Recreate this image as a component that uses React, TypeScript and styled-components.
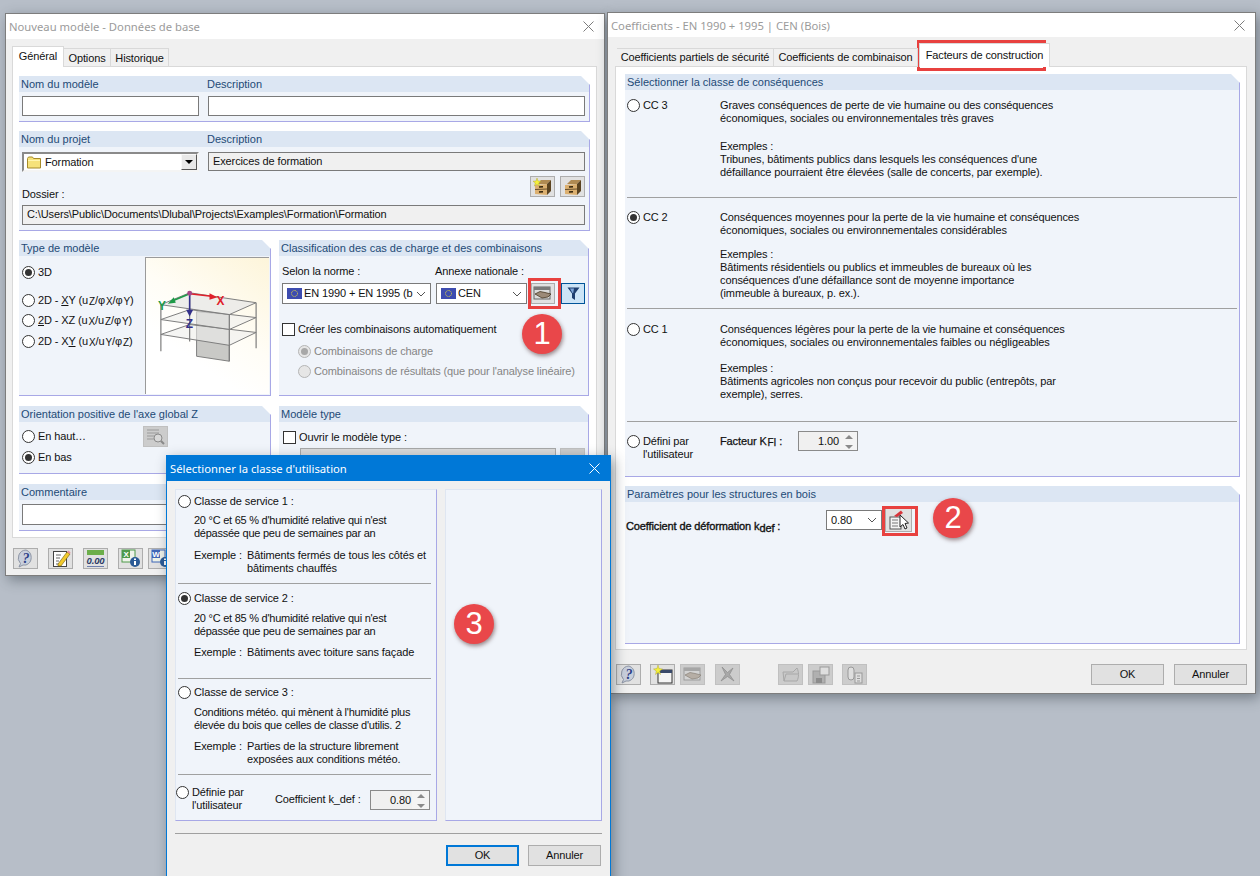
import React from 'react';
import styled, {createGlobalStyle} from 'styled-components';

const GlobalStyle = createGlobalStyle`
    html, body {
        margin: 0;
        padding: 0;
        background: #b7bec8;
    }
    body {
        font-family: "Liberation Sans", Arial, sans-serif;
        font-size: 11px;
        letter-spacing: -0.12px;
        line-height: 13px;
        color: #111;
    }
    * {
        box-sizing: border-box;
    }
`;

const Desktop = styled.div`
    position: relative;
    width: 1260px;
    height: 876px;
    overflow: hidden;
    background: #b7bec8;
`;

const Win = styled.div<{$x: number; $y: number; $w: number; $h: number; $active?: boolean}>`
    position: absolute;
    left: ${(p) => p.$x}px;
    top: ${(p) => p.$y}px;
    width: ${(p) => p.$w}px;
    height: ${(p) => p.$h}px;
    background: #f0f0f0;
    border: 1px solid ${(p) => (p.$active ? '#0078d7' : '#7d7d7d')};
    box-shadow: 3px 4px 12px rgba(40, 50, 60, 0.45);
    display: flex;
    flex-direction: column;
`;

const TitleBar = styled.div<{$h: number; $active?: boolean}>`
    flex: none;
    height: ${(p) => p.$h}px;
    display: flex;
    align-items: center;
    justify-content: space-between;
    padding: 0 10px 0 3px;
    font-family: "Noto Sans", sans-serif;
    font-size: 11.25px;
    letter-spacing: 0;
    background: ${(p) => (p.$active ? '#0078d7' : '#fff')};
    color: ${(p) => (p.$active ? '#fff' : '#9b9b9b')};
`;

const WinBody = styled.div<{$pad: string}>`
    flex: 1;
    padding: ${(p) => p.$pad};
    min-height: 0;
`;

const TabRow = styled.div`
    display: flex;
    align-items: flex-end;
    margin-bottom: -1px;
    position: relative;
    z-index: 1;
`;

const Tab = styled.div<{$w: number; $h: number; $lh: number; $on?: boolean; $ml?: number}>`
    width: ${(p) => p.$w}px;
    height: ${(p) => p.$h}px;
    margin-left: ${(p) => p.$ml || 0}px;
    background: ${(p) => (p.$on ? '#fff' : '#f0f0f0')};
    border: 1px solid #d9d9d9;
    border-bottom: ${(p) => (p.$on ? '0' : '1px solid #d9d9d9')};
    border-left: ${(p) => (p.$on ? '1px solid #d9d9d9' : '0')};
    text-align: center;
    line-height: ${(p) => p.$lh}px;
    white-space: nowrap;
`;

const Panel = styled.div<{$h: number; $pad: string; $gap: number}>`
    height: ${(p) => p.$h}px;
    background: #fff;
    border: 1px solid #d9d9d9;
    padding: ${(p) => p.$pad};
    display: flex;
    flex-direction: column;
    gap: ${(p) => p.$gap}px;
`;

const Section = styled.div<{$h: number}>`
    height: ${(p) => p.$h}px;
    display: flex;
    flex-direction: column;
`;

const SectionHead = styled.div<{$cols?: string}>`
    flex: none;
    height: 16px;
    padding-left: 2px;
    display: grid;
    grid-template-columns: ${(p) => p.$cols || '1fr'};
    line-height: 16px;
    letter-spacing: 0;
    color: #234a76;
    background: #dce6f3;
    border-right: 1px solid #a8a8e6;
    clip-path: polygon(0 0, calc(100% - 9px) 0, 100% 9px, 100% 100%, 0 100%);
`;

const SectionBody = styled.div<{$pad?: string}>`
    flex: 1;
    min-height: 0;
    background: #f0f4fa;
    border-right: 1px solid #a8a8e6;
    border-bottom: 1px solid #a8a8e6;
    padding: ${(p) => p.$pad || '0'};
`;

const FieldGrid = styled.div`
    display: grid;
    grid-template-columns: 177px 377px;
    gap: 9px;
    align-items: start;
`;

const Field = styled.div<{$h?: number; $w?: number; $gray?: boolean; $dim?: boolean}>`
    height: ${(p) => p.$h || 20}px;
    width: ${(p) => (p.$w ? `${p.$w}px` : 'auto')};
    flex: none;
    border: 1px solid ${(p) => (p.$dim ? '#a8a8a8' : '#7a7a7a')};
    background: ${(p) => (p.$dim ? '#dadada' : p.$gray ? '#f0f0f0' : '#fff')};
    padding: 0 4px;
    line-height: 17px;
    white-space: nowrap;
    overflow: hidden;
`;

const OldCombo = styled.div`
    height: 20px;
    display: flex;
    align-items: center;
    gap: 3px;
    border: 2px solid;
    border-color: #8a8a8a #f4f4f4 #f4f4f4 #8a8a8a;
    background: #fff;
    padding-left: 3px;
    position: relative;
`;

const OldComboArrow = styled.span`
    margin-left: auto;
    width: 16px;
    height: 16px;
    background: #e8e8e8;
    border: 1px solid;
    border-color: #f8f8f8 #555 #555 #f8f8f8;
    display: flex;
    align-items: center;
    justify-content: center;
    &::after {
        content: '';
        border: 4px solid transparent;
        border-top: 4px solid #000;
        border-bottom: 0;
    }
`;

const Combo = styled.div<{$w: number; $h?: number; $ml?: number}>`
    width: ${(p) => p.$w}px;
    height: ${(p) => p.$h || 21}px;
    margin-left: ${(p) => p.$ml || 0}px;
    flex: none;
    background: #fff;
    border: 1px solid #7a7a7a;
    display: flex;
    align-items: center;
    gap: 2px;
    padding: 0 4px;
    white-space: nowrap;
    overflow: hidden;
`;

const ComboText = styled.span`
    flex: 1;
    min-width: 0;
    overflow: hidden;
`;

const IconBtn = styled.div<{$w?: number; $h?: number; $ml?: number; $off?: boolean; $blue?: boolean}>`
    flex: none;
    width: ${(p) => p.$w || 25}px;
    height: ${(p) => p.$h || 21}px;
    margin-left: ${(p) => p.$ml || 0}px;
    display: flex;
    align-items: center;
    justify-content: center;
    border: 1px solid ${(p) => (p.$blue ? '#005499' : p.$off ? '#c0c0c0' : '#adadad')};
    background: ${(p) => (p.$blue ? '#cce4f7' : p.$off ? '#cccccc' : '#e1e1e1')};
    overflow: hidden;
`;

const MidRow = styled.div`
    height: 29px;
    margin-top: 4px;
    display: flex;
    justify-content: space-between;
`;

const MidLabel = styled.span`
    padding-top: 12px;
`;

const BtnGroup = styled.div`
    display: flex;
    gap: 5px;
`;

const TwoCols = styled.div`
    display: grid;
    grid-template-columns: 252px 310px;
    gap: 10px 8px;
    margin-bottom: 1px;
`;

const RadioRow = styled.div<{$h?: number; $mt?: number; $ml?: number; $off?: boolean}>`
    display: flex;
    align-items: center;
    gap: 3px;
    height: ${(p) => (p.$h ? `${p.$h}px` : 'auto')};
    margin-top: ${(p) => p.$mt || 0}px;
    margin-left: ${(p) => p.$ml || 0}px;
    color: ${(p) => (p.$off ? '#858585' : 'inherit')};
    white-space: nowrap;
`;

const RadioMark = styled.span<{$on?: boolean; $off?: boolean}>`
    flex: none;
    width: 13px;
    height: 13px;
    border-radius: 50%;
    border: 1px solid ${(p) => (p.$off ? '#b5b5b5' : '#333')};
    background: ${(p) => (p.$off ? '#e6e6e6' : '#fff')};
    display: flex;
    align-items: center;
    justify-content: center;
    &::after {
        content: '';
        display: ${(p) => (p.$on ? 'block' : 'none')};
        width: 7px;
        height: 7px;
        border-radius: 50%;
        background: ${(p) => (p.$off ? '#a8a8a8' : '#333')};
    }
`;

const CheckMark = styled.span`
    flex: none;
    width: 13px;
    height: 13px;
    background: #fff;
    border: 1px solid #333;
`;

const Low = styled.span`
    font-size: 10px;
    position: relative;
    top: 1px;
    margin-left: 1px;
`;

const TypeBody = styled.div`
    display: flex;
    height: 100%;
`;

const TypeList = styled.div`
    width: 126px;
    padding: 6px 0 0 3px;
`;

const ModelPicture = styled.div`
    width: 124px;
    height: 137px;
    margin-top: 1px;
    border-top: 1px solid #9a9a9a;
    border-left: 1px solid #9a9a9a;
    background: linear-gradient(215deg, #fdf5da 0%, #fffdf6 45%, #ffffff 70%);
`;

const LabelRow = styled.div`
    display: grid;
    grid-template-columns: 153px 1fr;
`;

const ComboRow = styled.div`
    display: flex;
    margin-top: 5px;
`;

const OptionRow = styled.div`
    display: grid;
    grid-template-columns: 121px 25px;
    height: 21px;
    align-items: center;
`;

const TemplateRow = styled.div`
    display: flex;
    gap: 4px;
    margin-top: 4px;
    padding-left: 17px;
`;

const Footer = styled.div<{$pad: string}>`
    display: flex;
    padding: ${(p) => p.$pad};
`;

const PushBtn = styled.div<{$def?: boolean; $ml?: number}>`
    width: 73px;
    height: 21px;
    margin-left: ${(p) => p.$ml || 0}px;
    text-align: center;
    line-height: ${(p) => (p.$def ? 17 : 19)}px;
    background: #e1e1e1;
    border: ${(p) => (p.$def ? '2px solid #0078d7' : '1px solid #adadad')};
`;

const PushSpace = styled.div`
    flex: 1;
`;

// right window
const ClassRow = styled.div<{$h: number; $pad: number; $line?: boolean}>`
    height: ${(p) => p.$h}px;
    margin: 0 2px 0 2px;
    padding-top: ${(p) => p.$pad}px;
    border-top: ${(p) => (p.$line ? '1px solid #a0a0a0' : '0')};
    display: grid;
    grid-template-columns: 93px 1fr;
    align-items: start;
`;

const Para = styled.p<{$mt?: number}>`
    margin: ${(p) => p.$mt || 0}px 0 0;
    white-space: pre-line;
`;

const TwoLine = styled.div`
    white-space: pre-line;
`;

const FactorRow = styled.div`
    display: flex;
    align-items: center;
    margin-top: -4px;
`;

const FactorLabel = styled.span<{$w: number}>`
    width: ${(p) => p.$w}px;
    flex: none;
    -webkit-text-stroke: 0.25px #111;
`;

const Spinner = styled.div`
    width: 60px;
    height: 20px;
    flex: none;
    display: flex;
    background: #f0f0f0;
    border: 1px solid #8a8a8a;
`;

const SpinValue = styled.span`
    flex: 1;
    text-align: right;
    line-height: 18px;
    padding-right: 1px;
`;

const SpinArrows = styled.span`
    width: 17px;
    flex: none;
    display: flex;
    flex-direction: column;
    background: #f4f4f4;
    &::before, &::after {
        content: '';
        flex: 1;
        margin: 3px auto;
        width: 0;
        height: 0;
        border: 4px solid transparent;
    }
    &::before {
        border-top: 0;
        border-bottom: 4px solid #8a8a8a;
    }
    &::after {
        border-bottom: 0;
        border-top: 4px solid #8a8a8a;
    }
`;

const WoodRow = styled.div`
    display: grid;
    grid-template-columns: 200px 56px auto;
    justify-content: start;
    padding: 6px 0 0 1px;
`;

const WoodLabel = styled.span`
    padding-top: 12px;
    white-space: nowrap;
    -webkit-text-stroke: 0.35px #111;
`;

const WoodSub = styled.span`
    font-size: 11px;
    position: relative;
    top: 2px;
`;

const WoodCombo = styled.div`
    margin-top: 2px;
`;

// dialog
const DialogCols = styled.div`
    display: grid;
    grid-template-columns: 262px 157px;
    gap: 8px;
`;

const DialogSection = styled.div`
    height: 332px;
    background: #f0f4fa;
    border: 1px solid;
    border-color: #dfe6f1 #a8a8e6 #a8a8e6 #dfe6f1;
`;

const ServiceRow = styled.div<{$h: number; $pad: number; $line?: boolean}>`
    height: ${(p) => p.$h}px;
    margin: 0 5px 0 2px;
    padding-top: ${(p) => p.$pad}px;
    border-bottom: ${(p) => (p.$line ? '1px solid #a0a0a0' : '0')};
`;

const ServiceText = styled.p<{$mt: number}>`
    margin: ${(p) => p.$mt}px 0 0 16px;
    white-space: pre-line;
    letter-spacing: -0.25px;
`;

const Example = styled.div<{$mt: number}>`
    display: grid;
    grid-template-columns: 53px 1fr;
    margin: ${(p) => p.$mt}px 0 0 16px;
    white-space: pre-line;
`;

const OwnRow = styled.div`
    display: flex;
    margin-top: 11px;
`;

const OwnLeft = styled.div`
    width: 99px;
    flex: none;
    display: flex;
    gap: 3px;
    white-space: pre-line;
`;

const OwnRight = styled.div`
    display: flex;
    align-items: center;
    margin-top: 1px;
`;

const OwnLabel = styled.span`
    width: 95px;
    flex: none;
    white-space: nowrap;
`;

const Divider = styled.div`
    height: 1px;
    margin-top: 12px;
    background: #a0a0a0;
`;

const DialogButtons = styled.div`
    display: flex;
    justify-content: flex-end;
    gap: 9px;
    margin: 11px 1px 0 0;
`;

// annotations over the screenshot
const Callout = styled.div<{$x: number; $y: number}>`
    position: absolute;
    left: ${(p) => p.$x}px;
    top: ${(p) => p.$y}px;
    width: 40px;
    height: 40px;
    border-radius: 50%;
    background: #e9474a;
    color: #fff;
    font-size: 31px;
    letter-spacing: 0;
    line-height: 40px;
    text-align: center;
    box-shadow: 1px 2px 4px rgba(60, 20, 20, 0.5);
`;

const Frame = styled.div<{$x: number; $y: number; $w: number; $h: number}>`
    position: absolute;
    left: ${(p) => p.$x}px;
    top: ${(p) => p.$y}px;
    width: ${(p) => p.$w}px;
    height: ${(p) => p.$h}px;
    border: 3px solid #e8413f;
`;

const Close = ({light}: {light?: boolean}) => (
    <svg
        width='11'
        height='11'
        viewBox='0 0 11 11'
    >
        <path
            d='M0.5 0.5L10.5 10.5M10.5 0.5L0.5 10.5'
            stroke={light ? '#fff' : '#7c7c7c'}
            strokeWidth='1'
            fill='none'
        />
    </svg>
);

const Chevron = () => (
    <svg
        width='10'
        height='6'
        viewBox='0 0 10 6'
    >
        <path
            d='M1 1L5 5L9 1'
            stroke='#555'
            fill='none'
        />
    </svg>
);

const EuFlag = () => (
    <svg
        width='15'
        height='11'
        viewBox='0 0 15 11'
    >
        <rect
            width='15'
            height='11'
            fill='#3d4cb0'
        />
        <circle
            cx='7.5'
            cy='5.5'
            r='3'
            fill='none'
            stroke='#d8cf4a'
            strokeWidth='1'
            strokeDasharray='1 0.6'
        />
    </svg>
);

const Folder = () => (
    <svg
        width='15'
        height='13'
        viewBox='0 0 15 13'
    >
        <path
            d='M0.5 2.5L1.5 1H5.5L6.5 2.5H13.5V12H0.5Z'
            fill='#f6e27a'
            stroke='#a68b2a'
        />
        <rect
            x='1'
            y='4'
            width='12'
            height='1'
            fill='#fff5b0'
        />
    </svg>
);

// filing cabinet seen from the lower left, top and side in shade
const Cabinet = ({star}: {star?: boolean}) => (
    <svg
        width='20'
        height='18'
        viewBox='0 0 20 18'
    >
        <path
            d='M4 6L8 2H18L14 6Z'
            fill='#b08a52'
        />
        <path
            d='M14 6L18 2V13L14 17Z'
            fill='#5b4320'
        />
        <path
            d='M2 7L14 6V17L2 16Z'
            fill='#dcb070'
        />
        <path
            d='M2 11.5L14 11'
            stroke='#4a3515'
            strokeWidth='0.8'
        />
        <path
            d='M6 9L10 8.7M6 14L10 13.7'
            stroke='#2e2008'
            strokeWidth='1.6'
        />
        {star && (
            <path
                d='M4 0L5 3L8 3.2L5.7 5L6.6 8L4 6.3L1.4 8L2.3 5L0 3.2L3 3Z'
                fill='#f4f03a'
                stroke='#a8a020'
                strokeWidth='0.4'
            />
        )}
    </svg>
);

const HandDoc = ({dim}: {dim?: boolean}) => (
    <svg
        width='20'
        height='15'
        viewBox='0 0 20 15'
        opacity={dim ? 0.45 : 1}
    >
        <rect
            x='1'
            y='1'
            width='16'
            height='12'
            fill='#dcdcdc'
            stroke='#666'
        />
        <rect
            x='1'
            y='1'
            width='16'
            height='3'
            fill='#7a7a7a'
        />
        <path
            d='M2 8L7 5.5L12 6.5L18 8L15 11L9 12Z'
            fill='#9c8a78'
            stroke='#3a2a14'
            strokeWidth='0.7'
        />
    </svg>
);

const Funnel = () => (
    <svg
        width='13'
        height='14'
        viewBox='0 0 13 14'
    >
        <path
            d='M0.5 0.5H12.5L8 6.5V13L5 11V6.5Z'
            fill='#1f3f70'
        />
        <path
            d='M3 1.5H7L6.2 6H5.5Z'
            fill='#7fa6d8'
        />
    </svg>
);

const Magnifier = () => (
    <svg
        width='21'
        height='18'
        viewBox='0 0 21 18'
    >
        <path
            d='M2 2H14M2 5H14M2 8H9M2 11H9'
            stroke='#9a9a9a'
        />
        <circle
            cx='13'
            cy='10'
            r='4'
            fill='#d8d8d8'
            stroke='#8a8a8a'
        />
        <path
            d='M16 13L19 16'
            stroke='#8a8a8a'
            strokeWidth='2'
        />
    </svg>
);

const Help = () => (
    <svg
        width='20'
        height='19'
        viewBox='0 0 20 19'
    >
        <path
            d='M10 1A8 8 0 0 1 10 16H7L3 18L4.5 14.5A8 8 0 0 1 10 1Z'
            fill='#c8cfdc'
            stroke='#8d95a5'
        />
        <text
            x='10'
            y='14'
            fontSize='14'
            fontWeight='700'
            fontStyle='italic'
            textAnchor='middle'
            fill='#2d3f86'
            fontFamily='Liberation Serif, serif'
        >
            {'?'}
        </text>
    </svg>
);

const NotePencil = () => (
    <svg
        width='20'
        height='19'
        viewBox='0 0 20 19'
    >
        <rect
            x='2.5'
            y='2.5'
            width='13'
            height='15'
            fill='#fff'
            stroke='#444'
        />
        <path
            d='M5 6H10M5 9H9M5 12H8M5 15H10'
            stroke='#666'
        />
        <path
            d='M7 15L16 3L19 5L10 17L7 17Z'
            fill='#f2c92c'
            stroke='#6c5a10'
            strokeWidth='0.6'
        />
        <path
            d='M16 3L17.5 1.5L19.5 3.5L19 5Z'
            fill='#e88a9a'
        />
    </svg>
);

const Decimals = () => (
    <svg
        width='20'
        height='19'
        viewBox='0 0 20 19'
    >
        <rect
            x='1'
            y='1'
            width='17'
            height='5'
            fill='#6cae4a'
        />
        <text
            x='9.5'
            y='15'
            fontSize='9.5'
            fontWeight='700'
            fontStyle='italic'
            textAnchor='middle'
            fill='#2b3b66'
            fontFamily='Liberation Sans, sans-serif'
        >
            {'0.00'}
        </text>
        <path
            d='M1 17.5H18'
            stroke='#6f80ad'
        />
    </svg>
);

const OfficeInfo = ({color, letter}: {color: string; letter: string}) => (
    <svg
        width='20'
        height='19'
        viewBox='0 0 20 19'
    >
        <rect
            x='1'
            y='1'
            width='13'
            height='12'
            fill='#eef3ea'
            stroke={color}
        />
        <rect
            x='1'
            y='1'
            width='8'
            height='8'
            fill={color}
        />
        <text
            x='5'
            y='8'
            fontSize='8'
            fontWeight='700'
            textAnchor='middle'
            fill='#fff'
            fontFamily='Liberation Sans, sans-serif'
        >
            {letter}
        </text>
        <circle
            cx='14'
            cy='13'
            r='5'
            fill='#2a5a96'
        />
        <rect
            x='13'
            y='12'
            width='2'
            height='4'
            fill='#fff'
        />
        <rect
            x='13'
            y='9.5'
            width='2'
            height='1.5'
            fill='#fff'
        />
    </svg>
);

const NewWindow = () => (
    <svg
        width='20'
        height='19'
        viewBox='0 0 20 19'
    >
        <rect
            x='5'
            y='5'
            width='14'
            height='13'
            fill='#f5f5f5'
            stroke='#333'
        />
        <rect
            x='5'
            y='5'
            width='14'
            height='3'
            fill='#3a4a6a'
        />
        <path
            d='M5 0L6 3.5L9.5 4L6.7 6L7.5 9.5L5 7.5L2.5 9.5L3.3 6L0.5 4L4 3.5Z'
            fill='#f4f03a'
            stroke='#a8a020'
            strokeWidth='0.4'
        />
    </svg>
);

const CrossOff = () => (
    <svg
        width='17'
        height='17'
        viewBox='0 0 17 17'
    >
        <path
            d='M3 1L8.5 6.5L14 2L10.5 8.5L15 15L8.5 10.5L2 15L6.5 8.5Z'
            fill='#a8a8a8'
            stroke='#8c8c8c'
            strokeWidth='0.7'
        />
    </svg>
);

const FolderOff = () => (
    <svg
        width='20'
        height='17'
        viewBox='0 0 20 17'
    >
        <path
            d='M2 6H12L16 2C18 6 18 11 16 15H3Z'
            fill='#c8c8c8'
            stroke='#a8a8a8'
        />
        <path
            d='M3 15L5 8H17'
            stroke='#a8a8a8'
            fill='none'
        />
    </svg>
);

const DiskOff = () => (
    <svg
        width='18'
        height='18'
        viewBox='0 0 18 18'
    >
        <rect
            x='1'
            y='5'
            width='12'
            height='12'
            fill='#b0b0b0'
            stroke='#999'
        />
        <rect
            x='4'
            y='12'
            width='6'
            height='5'
            fill='#8c8c8c'
        />
        <rect
            x='8'
            y='1'
            width='9'
            height='8'
            fill='#dedede'
            stroke='#999'
        />
    </svg>
);

const CopyOff = () => (
    <svg
        width='18'
        height='18'
        viewBox='0 0 18 18'
    >
        <rect
            x='2'
            y='1'
            width='6'
            height='13'
            rx='3'
            fill='#dedede'
            stroke='#999'
        />
        <rect
            x='9'
            y='7'
            width='7'
            height='10'
            fill='#dedede'
            stroke='#999'
        />
        <path
            d='M11 10H14M11 12.5H14M11 15H14'
            stroke='#999'
        />
    </svg>
);

const PinCursor = () => (
    <svg
        width='22'
        height='20'
        viewBox='0 0 22 20'
    >
        <rect
            x='2'
            y='7'
            width='11'
            height='12'
            fill='#f4f4f4'
            stroke='#555'
        />
        <path
            d='M4 10H10M4 13H10M4 16H10'
            stroke='#777'
        />
        <path
            d='M6 6L13 0.5L15 3L9 7Z'
            fill='#d8343a'
        />
        <path
            d='M12 5L12 17L15 14.5L17 19L19 18L17 13.5L20.5 13Z'
            fill='#fff'
            stroke='#222'
        />
    </svg>
);

const ModelSketch = () => (
    <svg
        width='123'
        height='136'
        viewBox='0 0 124 137'
    >
        <g
            stroke='#7d7d7d'
            strokeWidth='1'
        >
            <path
                d='M51 54L84 57V104L51 99Z'
                fill='#c9c9c6'
            />
            <path
                d='M15 77L44 67L111 75L84 88Z'
                fill='#efefec'
                fillOpacity='0.6'
            />
            <path
                d='M15 62L44 52L111 60L84 72Z'
                fill='#efefec'
                fillOpacity='0.6'
            />
            <path
                d='M15 47L44 35L111 45L84 57Z'
                fill='#e9e9e7'
                fillOpacity='0.8'
            />
            <path
                d='M15 47V94M44 35V84M111 45V91M84 57V104'
                fill='none'
                strokeWidth='1.2'
            />
        </g>
        <path
            d='M44 36L66 38.5'
            stroke='#e0202a'
            strokeWidth='1.6'
        />
        <path
            d='M72 39.5L64 35.5L64 42Z'
            fill='#e0202a'
        />
        <path
            d='M44 36L27 43'
            stroke='#1e9a48'
            strokeWidth='1.6'
        />
        <path
            d='M22 46L28 39.5L30 45Z'
            fill='#1e9a48'
        />
        <path
            d='M44 36V53'
            stroke='#33308a'
            strokeWidth='1.6'
        />
        <path
            d='M44 59L40.5 52H47.5Z'
            fill='#33308a'
        />
        <circle
            cx='44'
            cy='35.5'
            r='2.5'
            fill='#a84686'
        />
        <text
            x='71'
            y='47'
            fontSize='12'
            fontWeight='700'
            fill='#e0202a'
            fontFamily='Liberation Sans, sans-serif'
        >
            {'X'}
        </text>
        <text
            x='12'
            y='52'
            fontSize='12'
            fontWeight='700'
            fill='#1e9a48'
            fontFamily='Liberation Sans, sans-serif'
        >
            {'Y'}
        </text>
        <text
            x='40'
            y='71'
            fontSize='12'
            fontWeight='700'
            fill='#33308a'
            fontFamily='Liberation Sans, sans-serif'
        >
            {'Z'}
        </text>
    </svg>
);

const Radio = ({on, off, children, h, mt, ml}: {
    on?: boolean;
    off?: boolean;
    children: React.ReactNode;
    h?: number;
    mt?: number;
    ml?: number;
}) => (
    <RadioRow
        $h={h}
        $mt={mt}
        $ml={ml}
        $off={off}
    >
        <RadioMark
            $on={on}
            $off={off}
        />
        <span>{children}</span>
    </RadioRow>
);

const NewModelWindow = () => (
    <Win
        $x={5}
        $y={13}
        $w={600}
        $h={563}
    >
        <TitleBar $h={25}>
            <span>{'Nouveau modèle - Données de base'}</span>
            <Close/>
        </TitleBar>
        <WinBody $pad='7px 7px 0 6px'>
            <TabRow>
                <Tab
                    $w={52}
                    $h={21}
                    $lh={19}
                    $on={true}
                >
                    {'Général'}
                </Tab>
                <Tab
                    $w={47}
                    $h={19}
                    $lh={19}
                >
                    {'Options'}
                </Tab>
                <Tab
                    $w={58}
                    $h={19}
                    $lh={19}
                >
                    {'Historique'}
                </Tab>
            </TabRow>
            <Panel
                $h={472}
                $pad='9px 6px 0 6px'
                $gap={9}
            >
                <Section $h={46}>
                    <SectionHead $cols='186px 1fr'>
                        <span>{'Nom du modèle'}</span>
                        <span>{'Description'}</span>
                    </SectionHead>
                    <SectionBody $pad='4px 0 0 3px'>
                        <FieldGrid>
                            <Field/>
                            <Field/>
                        </FieldGrid>
                    </SectionBody>
                </Section>
                <Section $h={100}>
                    <SectionHead $cols='186px 1fr'>
                        <span>{'Nom du projet'}</span>
                        <span>{'Description'}</span>
                    </SectionHead>
                    <SectionBody $pad='5px 4px 0 3px'>
                        <FieldGrid>
                            <OldCombo>
                                <Folder/>
                                <span>{'Formation'}</span>
                                <OldComboArrow/>
                            </OldCombo>
                            <Field
                                $h={19}
                                $gray={true}
                            >
                                {'Exercices de formation'}
                            </Field>
                        </FieldGrid>
                        <MidRow>
                            <MidLabel>{'Dossier :'}</MidLabel>
                            <BtnGroup>
                                <IconBtn>
                                    <Cabinet star={true}/>
                                </IconBtn>
                                <IconBtn>
                                    <Cabinet/>
                                </IconBtn>
                            </BtnGroup>
                        </MidRow>
                        <Field
                            $h={20}
                            $gray={true}
                        >
                            {'C:\\Users\\Public\\Documents\\Dlubal\\Projects\\Examples\\Formation\\Formation'}
                        </Field>
                    </SectionBody>
                </Section>
                <TwoCols>
                    <Section $h={156}>
                        <SectionHead>{'Type de modèle'}</SectionHead>
                        <SectionBody>
                            <TypeBody>
                                <TypeList>
                                    <Radio
                                        on={true}
                                        h={20}
                                    >
                                        {'3D'}
                                    </Radio>
                                    <Radio
                                        h={20}
                                        mt={8}
                                    >
                                        {'2D - '}
                                        <u>{'X'}</u>
                                        {'Y (u'}
                                        <Low>{'Z'}</Low>
                                        {'/φ'}
                                        <Low>{'X'}</Low>
                                        {'/φ'}
                                        <Low>{'Y'}</Low>
                                        {')'}
                                    </Radio>
                                    <Radio h={20}>
                                        <u>{'2'}</u>
                                        {'D - XZ (u'}
                                        <Low>{'X'}</Low>
                                        {'/u'}
                                        <Low>{'Z'}</Low>
                                        {'/φ'}
                                        <Low>{'Y'}</Low>
                                        {')'}
                                    </Radio>
                                    <Radio
                                        h={20}
                                        mt={1}
                                    >
                                        {'2D - X'}
                                        <u>{'Y'}</u>
                                        {' (u'}
                                        <Low>{'X'}</Low>
                                        {'/u'}
                                        <Low>{'Y'}</Low>
                                        {'/φ'}
                                        <Low>{'Z'}</Low>
                                        {')'}
                                    </Radio>
                                </TypeList>
                                <ModelPicture>
                                    <ModelSketch/>
                                </ModelPicture>
                            </TypeBody>
                        </SectionBody>
                    </Section>
                    <Section $h={156}>
                        <SectionHead>{'Classification des cas de charge et des combinaisons'}</SectionHead>
                        <SectionBody $pad='9px 3px 0 3px'>
                            <LabelRow>
                                <span>{'Selon la norme :'}</span>
                                <span>{'Annexe nationale :'}</span>
                            </LabelRow>
                            <ComboRow>
                                <Combo $w={149}>
                                    <EuFlag/>
                                    <ComboText>{'EN 1990 + EN 1995 (b'}</ComboText>
                                    <Chevron/>
                                </Combo>
                                <Combo
                                    $w={91}
                                    $ml={5}
                                >
                                    <EuFlag/>
                                    <ComboText>{'CEN'}</ComboText>
                                    <Chevron/>
                                </Combo>
                                <IconBtn
                                    $w={24}
                                    $ml={4}
                                >
                                    <HandDoc/>
                                </IconBtn>
                                <IconBtn
                                    $w={24}
                                    $ml={6}
                                    $blue={true}
                                >
                                    <Funnel/>
                                </IconBtn>
                            </ComboRow>
                            <RadioRow $mt={19}>
                                <CheckMark/>
                                <span>{'Créer les combinaisons automatiquement'}</span>
                            </RadioRow>
                            <Radio
                                on={true}
                                off={true}
                                mt={9}
                                ml={16}
                            >
                                {'Combinaisons de charge'}
                            </Radio>
                            <Radio
                                off={true}
                                mt={7}
                                ml={16}
                            >
                                {"Combinaisons de résultats (que pour l'analyse linéaire)"}
                            </Radio>
                        </SectionBody>
                    </Section>
                    <Section $h={68}>
                        <SectionHead>{"Orientation positive de l'axe global Z"}</SectionHead>
                        <SectionBody $pad='4px 3px 0 3px'>
                            <OptionRow>
                                <Radio>{'En haut…'}</Radio>
                                <IconBtn $off={true}>
                                    <Magnifier/>
                                </IconBtn>
                            </OptionRow>
                            <OptionRow>
                                <Radio on={true}>{'En bas'}</Radio>
                            </OptionRow>
                        </SectionBody>
                    </Section>
                    <Section $h={68}>
                        <SectionHead>{'Modèle type'}</SectionHead>
                        <SectionBody $pad='9px 4px 0 4px'>
                            <RadioRow>
                                <CheckMark/>
                                <span>{'Ouvrir le modèle type :'}</span>
                            </RadioRow>
                            <TemplateRow>
                                <Field
                                    $w={256}
                                    $dim={true}
                                />
                                <IconBtn $off={true}/>
                            </TemplateRow>
                        </SectionBody>
                    </Section>
                </TwoCols>
                <Section $h={47}>
                    <SectionHead>{'Commentaire'}</SectionHead>
                    <SectionBody $pad='4px 4px 0 3px'>
                        <Field $h={21}/>
                    </SectionBody>
                </Section>
            </Panel>
            <Footer $pad='10px 0 0 1px'>
                <IconBtn>
                    <Help/>
                </IconBtn>
                <IconBtn $ml={10}>
                    <NotePencil/>
                </IconBtn>
                <IconBtn $ml={10}>
                    <Decimals/>
                </IconBtn>
                <IconBtn $ml={10}>
                    <OfficeInfo
                        color='#4f9a4a'
                        letter='X'
                    />
                </IconBtn>
                <IconBtn $ml={5}>
                    <OfficeInfo
                        color='#3f66b8'
                        letter='W'
                    />
                </IconBtn>
            </Footer>
        </WinBody>
    </Win>
);

const CoefficientsWindow = () => (
    <Win
        $x={607}
        $y={12}
        $w={649}
        $h={682}
    >
        <TitleBar $h={24}>
            <span>{'Coefficients - EN 1990 + 1995 | CEN (Bois)'}</span>
            <Close/>
        </TitleBar>
        <WinBody $pad='6px 8px 0 7px'>
            <TabRow>
                <Tab
                    $w={157}
                    $h={19}
                    $lh={17}
                    $ml={2}
                >
                    {'Coefficients partiels de sécurité'}
                </Tab>
                <Tab
                    $w={144}
                    $h={19}
                    $lh={17}
                >
                    {'Coefficients de combinaison'}
                </Tab>
                <Tab
                    $w={131}
                    $h={24}
                    $lh={23}
                    $ml={1}
                    $on={true}
                >
                    {'Facteurs de construction'}
                </Tab>
            </TabRow>
            <Panel
                $h={584}
                $pad='7px 6px 0 9px'
                $gap={9}
            >
                <Section $h={403}>
                    <SectionHead>{'Sélectionner la classe de conséquences'}</SectionHead>
                    <SectionBody>
                        <ClassRow
                            $h={107}
                            $pad={9}
                        >
                            <Radio>{'CC 3'}</Radio>
                            <div>
                                <Para>
                                    {'Graves conséquences de perte de vie humaine ou des conséquences\néconomiques, sociales ou environnementales très graves'}
                                </Para>
                                <Para $mt={15}>
                                    {"Exemples :\nTribunes, bâtiments publics dans lesquels les conséquences d'une\ndéfaillance pourraient être élevées (salle de concerts, par exemple)."}
                                </Para>
                            </div>
                        </ClassRow>
                        <ClassRow
                            $h={111}
                            $pad={13}
                            $line={true}
                        >
                            <Radio on={true}>{'CC 2'}</Radio>
                            <div>
                                <Para>
                                    {'Conséquences moyennes pour la perte de la vie humaine et conséquences\néconomiques, sociales ou environnementales considérables'}
                                </Para>
                                <Para $mt={11}>
                                    {"Exemples :\nBâtiments résidentiels ou publics et immeubles de bureaux où les\nconséquences d'une défaillance sont de moyenne importance\n(immeuble à bureaux, p. ex.)."}
                                </Para>
                            </div>
                        </ClassRow>
                        <ClassRow
                            $h={113}
                            $pad={14}
                            $line={true}
                        >
                            <Radio>{'CC 1'}</Radio>
                            <div>
                                <Para>
                                    {'Conséquences légères pour la perte de la vie humaine et conséquences\néconomiques, sociales ou environnementales faibles ou négligeables'}
                                </Para>
                                <Para $mt={13}>
                                    {'Exemples :\nBâtiments agricoles non conçus pour recevoir du public (entrepôts, par\nexemple), serres.'}
                                </Para>
                            </div>
                        </ClassRow>
                        <ClassRow
                            $h={54}
                            $pad={13}
                            $line={true}
                        >
                            <OwnLeft>
                                <RadioMark/>
                                <TwoLine>{"Défini par\nl'utilisateur"}</TwoLine>
                            </OwnLeft>
                            <FactorRow>
                                <FactorLabel $w={78}>
                                    {'Facteur K'}
                                    <Low>{'FI'}</Low>
                                    {' :'}
                                </FactorLabel>
                                <Spinner>
                                    <SpinValue>{'1.00'}</SpinValue>
                                    <SpinArrows/>
                                </Spinner>
                            </FactorRow>
                        </ClassRow>
                    </SectionBody>
                </Section>
                <Section $h={158}>
                    <SectionHead>{'Paramètres pour les structures en bois'}</SectionHead>
                    <SectionBody>
                        <WoodRow>
                            <WoodLabel>
                                {'Coefficient de déformation k'}
                                <WoodSub>{'def'}</WoodSub>
                                {' :'}
                            </WoodLabel>
                            <WoodCombo>
                                <Combo
                                    $w={56}
                                    $h={20}
                                >
                                    <ComboText>{'0.80'}</ComboText>
                                    <Chevron/>
                                </Combo>
                            </WoodCombo>
                            <IconBtn
                                $w={27}
                                $h={24}
                                $ml={3}
                            >
                                <PinCursor/>
                            </IconBtn>
                        </WoodRow>
                    </SectionBody>
                </Section>
            </Panel>
            <Footer $pad='14px 0 0 1px'>
                <IconBtn>
                    <Help/>
                </IconBtn>
                <IconBtn $ml={9}>
                    <NewWindow/>
                </IconBtn>
                <IconBtn
                    $ml={5}
                    $off={true}
                >
                    <HandDoc dim={true}/>
                </IconBtn>
                <IconBtn
                    $ml={10}
                    $off={true}
                >
                    <CrossOff/>
                </IconBtn>
                <IconBtn
                    $ml={38}
                    $off={true}
                >
                    <FolderOff/>
                </IconBtn>
                <IconBtn
                    $ml={5}
                    $off={true}
                >
                    <DiskOff/>
                </IconBtn>
                <IconBtn
                    $ml={9}
                    $off={true}
                >
                    <CopyOff/>
                </IconBtn>
                <PushSpace/>
                <PushBtn>{'OK'}</PushBtn>
                <PushBtn $ml={10}>{'Annuler'}</PushBtn>
            </Footer>
        </WinBody>
    </Win>
);

const ServiceClassDialog = () => (
    <Win
        $x={166}
        $y={455}
        $w={445}
        $h={440}
        $active={true}
    >
        <TitleBar
            $h={25}
            $active={true}
        >
            <span>{"Sélectionner la classe d'utilisation"}</span>
            <Close light={true}/>
        </TitleBar>
        <WinBody $pad='8px 8px 0 8px'>
            <DialogCols>
                <DialogSection>
                    <ServiceRow
                        $h={94}
                        $pad={5}
                        $line={true}
                    >
                        <Radio>{'Classe de service 1 :'}</Radio>
                        <ServiceText $mt={6}>
                            {"20 °C et 65 % d'humidité relative qui n'est\ndépassée que peu de semaines par an"}
                        </ServiceText>
                        <Example $mt={9}>
                            <span>{'Exemple :'}</span>
                            <span>{'Bâtiments fermés de tous les côtés et\nbâtiments chauffés'}</span>
                        </Example>
                    </ServiceRow>
                    <ServiceRow
                        $h={95}
                        $pad={8}
                        $line={true}
                    >
                        <Radio on={true}>{'Classe de service 2 :'}</Radio>
                        <ServiceText $mt={7}>
                            {"20 °C et 85 % d'humidité relative qui n'est\ndépassée que peu de semaines par an"}
                        </ServiceText>
                        <Example $mt={8}>
                            <span>{'Exemple :'}</span>
                            <span>{'Bâtiments avec toiture sans façade'}</span>
                        </Example>
                    </ServiceRow>
                    <ServiceRow
                        $h={96}
                        $pad={7}
                        $line={true}
                    >
                        <Radio>{'Classe de service 3 :'}</Radio>
                        <ServiceText $mt={7}>
                            {"Conditions météo. qui mènent à l'humidité plus\nélevée du bois que celles de classe d'utilis. 2"}
                        </ServiceText>
                        <Example $mt={8}>
                            <span>{'Exemple :'}</span>
                            <span>{'Parties de la structure librement\nexposées aux conditions météo.'}</span>
                        </Example>
                    </ServiceRow>
                    <OwnRow>
                        <OwnLeft>
                            <RadioMark/>
                            <TwoLine>{"Définie par\nl'utilisateur"}</TwoLine>
                        </OwnLeft>
                        <OwnRight>
                            <OwnLabel>{'Coefficient k_def :'}</OwnLabel>
                            <Spinner>
                                <SpinValue>{'0.80'}</SpinValue>
                                <SpinArrows/>
                            </Spinner>
                        </OwnRight>
                    </OwnRow>
                </DialogSection>
                <DialogSection/>
            </DialogCols>
            <Divider/>
            <DialogButtons>
                <PushBtn $def={true}>{'OK'}</PushBtn>
                <PushBtn>{'Annuler'}</PushBtn>
            </DialogButtons>
        </WinBody>
    </Win>
);

export default function App() {
    return (
        <Desktop>
            <GlobalStyle/>
            <NewModelWindow/>
            <CoefficientsWindow/>
            <ServiceClassDialog/>
            <Frame
                $x={528}
                $y={278}
                $w={33}
                $h={31}
            />
            <Frame
                $x={917}
                $y={40}
                $w={129}
                $h={31}
            />
            <Frame
                $x={882}
                $y={506}
                $w={36}
                $h={30}
            />
            <Callout
                $x={522}
                $y={314}
            >
                {'1'}
            </Callout>
            <Callout
                $x={933}
                $y={498}
            >
                {'2'}
            </Callout>
            <Callout
                $x={454}
                $y={604}
            >
                {'3'}
            </Callout>
        </Desktop>
    );
}
